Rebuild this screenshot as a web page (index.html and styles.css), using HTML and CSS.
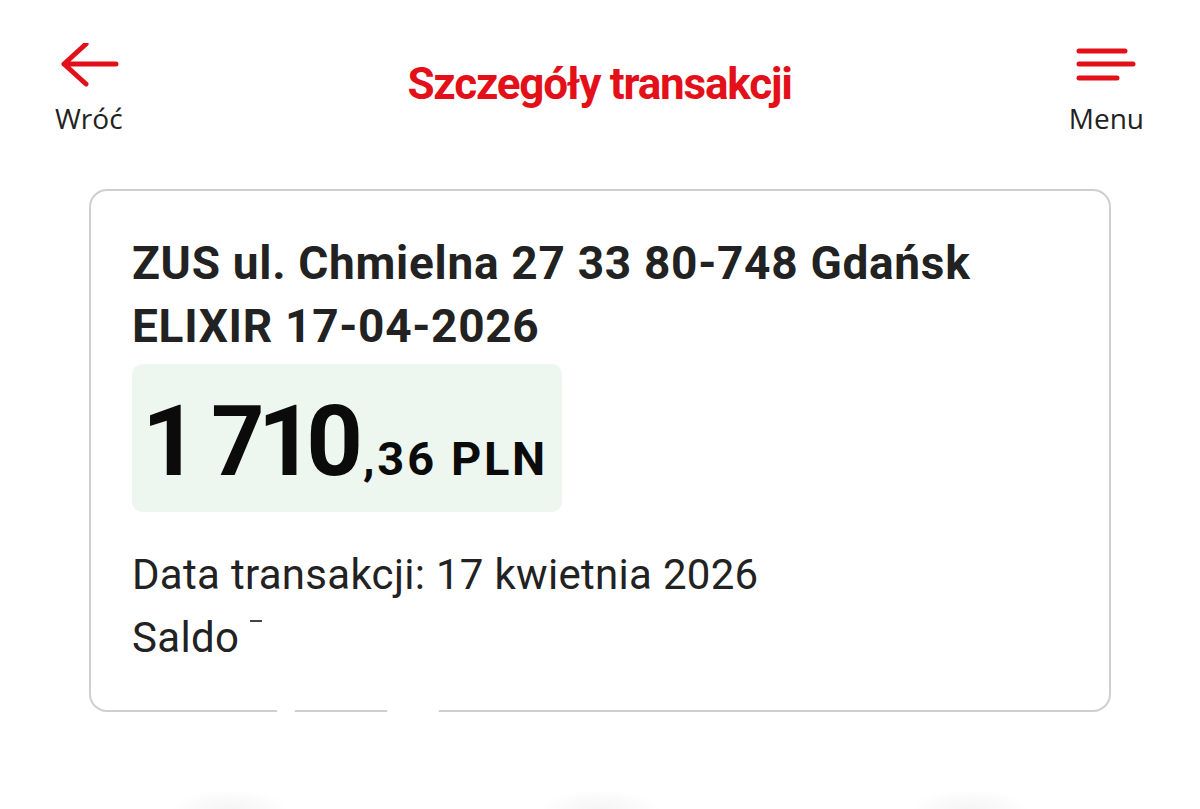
FILE: index.html
```html
<!DOCTYPE html>
<html lang="pl">
  <head>
    <meta charset="utf-8">
    <title>Szczegóły transakcji</title>
    <link rel="stylesheet" href="styles.css">
  </head>
  <body>
    <div class="topbar">
      <a class="nav nav-back" href="#">
        <svg class="nav-icon" width="60" height="44" viewBox="0 0 60 44">
          <path d="M5 21 H57 M27 1 L5 21 L27 41" />
        </svg>
        <span class="nav-label">Wróć</span>
      </a>
      <h1 class="title">Szczegóły transakcji</h1>
      <a class="nav nav-menu" href="#">
        <svg class="nav-icon" width="62" height="44" viewBox="0 0 62 44">
          <path d="M4 8 H50 M4 21 H58 M4 35 H42" />
        </svg>
        <span class="nav-label">Menu</span>
      </a>
    </div>

    <div class="card">
      <h2 class="payee">ZUS ul. Chmielna 27 33 80-748 Gdańsk ELIXIR 17-04-2026</h2>
      <div class="amount">
        <span class="amount-int">1 710</span><span class="amount-frac">,36 PLN</span>
      </div>
      <p class="detail">Data transakcji: 17 kwietnia 2026</p>
      <p class="detail">Saldo <span class="blurred"></span></p>
      <span class="redact redact-a"></span>
      <span class="redact redact-b"></span>
    </div>

    <div class="tabs-fade">
      <span class="tab-ghost"></span>
      <span class="tab-ghost"></span>
      <span class="tab-ghost"></span>
    </div>
  </body>
</html>
```

FILE: styles.css
```css
body {
  margin: 0;
  background: #fff;
  color: #1f1f1f;
  font-family: Roboto, "Open Sans", sans-serif;
  height: 809px;
  overflow: hidden;
  position: relative;
}

.topbar {
  display: grid;
  grid-template-columns: 1fr auto 1fr;
  align-items: start;
  padding: 43px 56px 0 55px;
}

.nav {
  display: flex;
  flex-direction: column;
  align-items: center;
  text-decoration: none;
  color: #222;
}
.nav-back { justify-self: start; }
.nav-menu { justify-self: end; }

.nav-icon path {
  fill: none;
  stroke: #e3101a;
  stroke-width: 5;
  stroke-linecap: round;
  stroke-linejoin: round;
}

.nav-label {
  margin-top: 14px;
  font-family: "Open Sans", sans-serif;
  font-size: 28px;
  line-height: 34px;
}

.title {
  margin: 15px 0 0 0;
  color: #e3101a;
  font-size: 44px;
  line-height: 53px;
  font-weight: 700;
  letter-spacing: -1.2px;
}

.card {
  position: relative;
  margin: 54px 89px 0 89px;
  border: 2px solid #cfcfcf;
  border-radius: 18px;
  padding: 41px 40px 41px 41px;
}

.payee {
  margin: 0;
  font-size: 46px;
  line-height: 63px;
  font-weight: 700;
  letter-spacing: 0.7px;
  color: #222;
}

.amount {
  display: inline-flex;
  align-items: baseline;
  margin-top: 6px;
  padding: 28px 14px 22px 13px;
  background: #eef6f0;
  border-radius: 10px;
  color: #0b0b0b;
  font-weight: 700;
  font-variant-numeric: proportional-nums;
}
.amount-int {
  font-size: 99px;
  line-height: 98px;
  letter-spacing: -3px;
}
.amount-frac {
  font-size: 47px;
  line-height: 45px;
  margin-left: 2px;
  letter-spacing: 2.6px;
}

.detail {
  margin: 0;
  font-size: 42px;
  line-height: 63px;
  letter-spacing: 0.3px;
  color: #222;
}
.amount + .detail { margin-top: 31px; }

.blurred {
  display: inline-block;
  width: 12px;
  height: 24px;
  border-top: 2px solid #444;
  vertical-align: 6px;
}

.redact {
  position: absolute;
  bottom: -6px;
  height: 12px;
  background: #fff;
  border-radius: 6px;
}
.redact-a { left: 186px; width: 18px; }
.redact-b { left: 296px; width: 52px; }

.tabs-fade {
  position: absolute;
  left: 0;
  right: 0;
  bottom: 0;
  height: 20px;
  display: flex;
  justify-content: space-between;
  padding: 0 170px;
}
.tab-ghost {
  width: 120px;
  height: 20px;
  background: radial-gradient(ellipse at 50% 100%, #f5f5f5 0%, #fbfbfb 45%, rgba(255,255,255,0) 70%);
}
```
